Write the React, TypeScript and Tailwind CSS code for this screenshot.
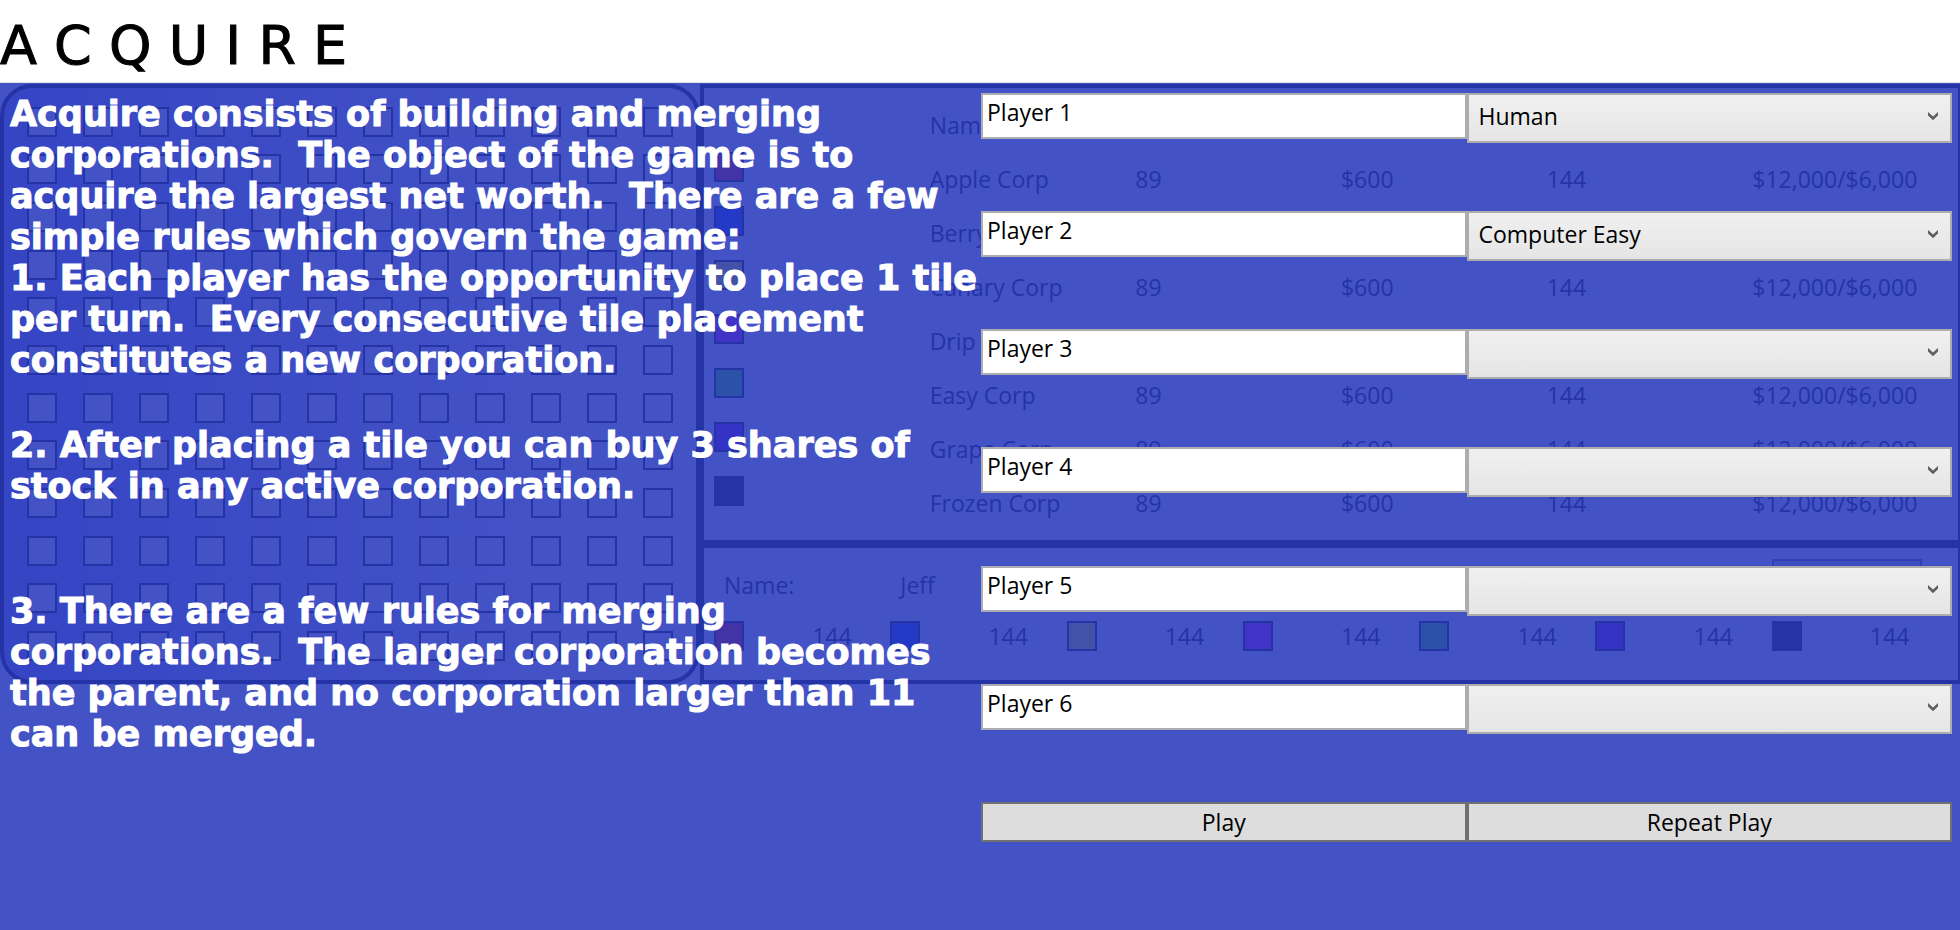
import React from "react";

const corporations = [
  { name: "Apple Corp", color: "bg-[#ff0000]" },
  { name: "Berry Corp", color: "bg-[#0030ff]" },
  { name: "Canary Corp", color: "bg-[#ffff00]" },
  { name: "Drip Corp", color: "bg-[#e000ff]" },
  { name: "Easy Corp", color: "bg-[#38ff10]" },
  { name: "Grape Corp", color: "bg-[#8000ff]" },
  { name: "Frozen Corp", color: "bg-black" },
];

const players = [
  { name: "Player 1", kind: "Human" },
  { name: "Player 2", kind: "Computer Easy" },
  { name: "Player 3", kind: "" },
  { name: "Player 4", kind: "" },
  { name: "Player 5", kind: "" },
  { name: "Player 6", kind: "" },
];

const introduction = `Acquire consists of building and merging
corporations.  The object of the game is to
acquire the largest net worth.  There are a few
simple rules which govern the game:
1. Each player has the opportunity to place 1 tile
per turn.  Every consecutive tile placement
constitutes a new corporation.`;

const buyingRule = `2. After placing a tile you can buy 3 shares of
stock in any active corporation.`;

const mergingRule = `3. There are a few rules for merging
corporations.  The larger corporation becomes
the parent, and no corporation larger than 11
can be merged.`;

function Swatch({ color }: { color: string }) {
  return <div className={`size-[30px] shrink-0 border-2 border-black ${color}`} />;
}

function TileBoard() {
  return (
    <div className="grid grid-cols-12 grid-rows-12 rounded-[32px] border-4 border-black bg-linear-to-r from-[#9090f4] to-white to-80% p-[10px]">
      {Array.from({ length: 144 }, (_, i) => (
        <div key={i} className="flex items-center justify-center">
          <Swatch color="bg-white" />
        </div>
      ))}
    </div>
  );
}

function StockTable() {
  return (
    <div className="h-[460px] border-4 border-r-2 border-black p-[10px]">
      <table className="w-full table-fixed border-collapse text-left">
        <thead>
          <tr className="h-[54px]">
            <td />
            <th className="p-0 pl-[10px] font-normal">Name</th>
            <td colSpan={4} />
          </tr>
        </thead>
        <tbody>
          {corporations.map((c) => (
            <tr key={c.name} className="h-[54px]">
              <td className="p-0 align-top">
                <Swatch color={c.color} />
              </td>
              <td className="p-0 pl-[10px]">{c.name}</td>
              <td className="p-0 pl-[10px]">89</td>
              <td className="p-0 pl-[10px]">$600</td>
              <td className="p-0 pl-[10px]">144</td>
              <td className="p-0 pl-[10px]">$12,000/$6,000</td>
            </tr>
          ))}
        </tbody>
      </table>
    </div>
  );
}

function PlayerPanel() {
  return (
    <div className="h-[140px] border-4 border-r-2 border-black p-[10px]">
      <div className="grid h-[54px] grid-cols-7 items-center">
        <span className="pl-[10px]">Name:</span>
        <span className="pl-[10px]">Jeff</span>
        <button
          type="button"
          aria-label="End turn"
          className="col-start-7 h-[52px] w-[150px] border-2 border-[#606080] bg-[#d0d0e0]"
        />
      </div>
      <div className="grid h-12 grid-cols-7">
        {corporations.map((c) => (
          <div key={c.name} className="grid grid-cols-2 items-center">
            <Swatch color={c.color} />
            <span className="pl-[10px]">144</span>
          </div>
        ))}
      </div>
    </div>
  );
}

function PlayerRow({ name, kind }: { name: string; kind: string }) {
  return (
    <div className="grid grid-cols-2 items-start">
      <input
        aria-label={`${name} name`}
        defaultValue={name}
        className="h-[46px] w-full border-2 border-[#abadb3] bg-white px-1 pb-2 outline-none"
      />
      <div className="relative">
        <select
          aria-label={`${name} type`}
          defaultValue={kind}
          className="h-[50px] w-full appearance-none border-2 border-[#acacac] bg-linear-to-b from-[#f0f0f0] to-[#e5e5e5] px-[10px] pb-1 outline-none"
        >
          <option value="" />
          <option>Human</option>
          <option>Computer Easy</option>
        </select>
        <svg
          viewBox="0 0 10 8"
          className="pointer-events-none absolute top-[19px] right-[14px] h-2 w-[10px] fill-[#606060]"
        >
          <path d="M0 0 5 4.6 10 0V3.4L5 8.2 0 3.4Z" />
        </svg>
      </div>
    </div>
  );
}

export default function App() {
  return (
    <div className="flex min-h-screen flex-col bg-white font-['Open_Sans','Noto_Sans',sans-serif] text-[23px] leading-8 text-black">
      <header className="flex h-[83px] items-center border-b border-[#e3e3ea]">
        <h1 className="pt-[10px] font-['DejaVu_Sans',sans-serif] text-[54px] leading-none whitespace-pre [-webkit-text-stroke:1px_black]">
          A C Q U I R E
        </h1>
      </header>
      <main className="grid grow grid-cols-1">
        <div inert className="col-start-1 row-start-1 grid h-[601px] grid-cols-[5fr_9fr] pt-px">
          <TileBoard />
          <div>
            <StockTable />
            <PlayerPanel />
          </div>
        </div>
        <div className="z-10 col-start-1 row-start-1 grid grid-cols-2 bg-[#293abd]/88 py-[10px] pr-2 pl-[10px]">
          <div className="pt-px font-['DejaVu_Sans','Open_Sans',sans-serif] text-[35px] leading-[41px] font-bold whitespace-pre text-white [-webkit-text-stroke:1px_white]">
            <p>{introduction}</p>
            <p className="mt-11">{buyingRule}</p>
            <p className="mt-[84px]">{mergingRule}</p>
          </div>
          <form className="grid grid-rows-7" onSubmit={(e) => e.preventDefault()}>
            {players.map((p) => (
              <PlayerRow key={p.name} {...p} />
            ))}
            <div className="grid grid-cols-2 items-start">
              <button type="submit" className="h-10 border-2 border-[#707070] bg-[#dddddd]">
                Play
              </button>
              <button type="button" className="h-10 border-2 border-[#707070] bg-[#dddddd]">
                Repeat Play
              </button>
            </div>
          </form>
        </div>
      </main>
    </div>
  );
}
